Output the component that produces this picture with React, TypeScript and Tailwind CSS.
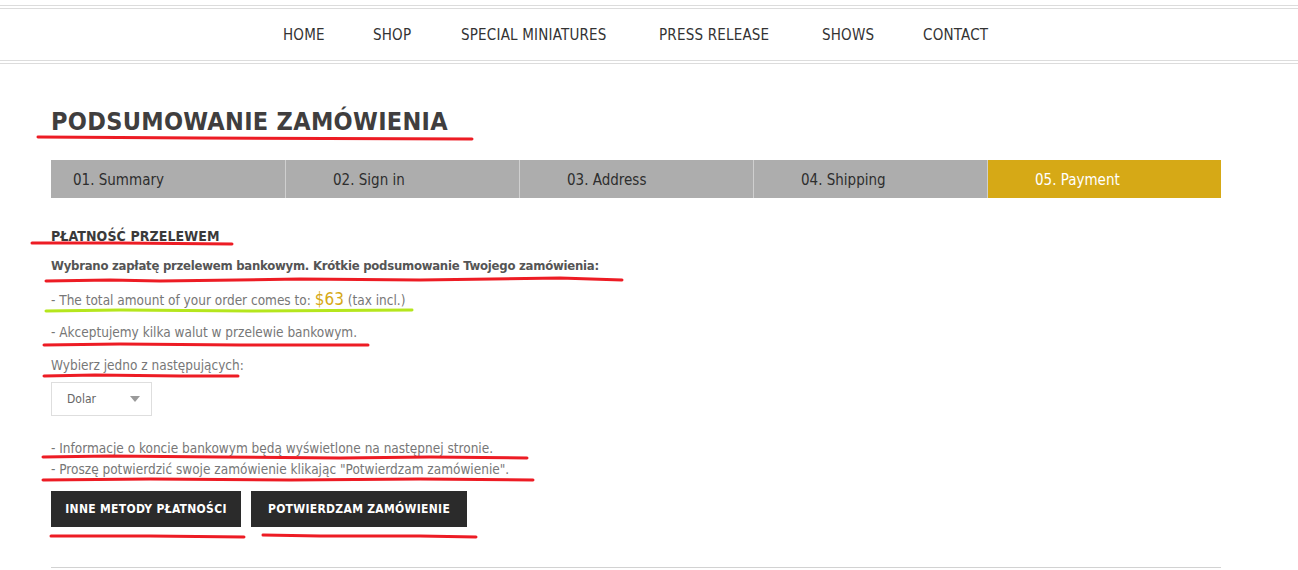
import React from "react";

const navItems: { label: string; w: string }[] = [
  { label: "HOME", w: "w-[90px]" },
  { label: "SHOP", w: "w-[88px]" },
  { label: "SPECIAL MINIATURES", w: "w-[198px]" },
  { label: "PRESS RELEASE", w: "w-[163px]" },
  { label: "SHOWS", w: "w-[101px]" },
  { label: "CONTACT", w: "w-[90px]" },
];

const steps = ["01. Summary", "02. Sign in", "03. Address", "04. Shipping", "05. Payment"];

function Annotations() {
  const red = "#ed1c24";
  const lines: { pts: string; c: string }[] = [
    { pts: "38,137 200,138 472,139", c: red },
    { pts: "32,243 120,243 232,244", c: red },
    { pts: "46,281 110,280 160,281 300,279 420,280 560,278 622,280", c: red },
    { pts: "46,311 120,310 250,311 412,310", c: "#b5e61d" },
    { pts: "44,345 120,344 240,345 368,345", c: red },
    { pts: "44,376 95,375 180,376 238,376", c: red },
    { pts: "43,457 110,456 220,457 340,458 430,457 527,458", c: red },
    { pts: "43,480 150,479 290,480 420,479 533,480", c: red },
    { pts: "51,536 150,536 244,537", c: red },
    { pts: "263,535 320,536 420,536 476,537", c: red },
  ];
  return (
    <svg
      className="pointer-events-none absolute left-0 top-0"
      width="1298"
      height="570"
      viewBox="0 0 1298 570"
    >
      {lines.map((l, i) => (
        <polyline
          key={i}
          points={l.pts}
          fill="none"
          stroke={l.c}
          strokeWidth={3}
          strokeLinecap="round"
          strokeLinejoin="round"
        />
      ))}
    </svg>
  );
}

export default function App() {
  return (
    <div className="relative w-[1298px] h-[570px] overflow-hidden bg-white font-['DejaVu_Sans_Condensed','DejaVu_Sans',sans-serif]">
      {/* Header */}
      <div className="pt-[5px]">
        <div className="h-px bg-[#dcdcdc]" />
        <div className="h-[2px]" />
        <div className="h-px bg-[#dcdcdc]" />
        <nav className="flex h-[51px] items-center pl-[283px] pt-[2px] text-[15px] text-[#333] tracking-[0.2px]">
          {navItems.map((n) => (
            <div key={n.label} className={`${n.w} shrink-0 whitespace-nowrap`}>
              {n.label}
            </div>
          ))}
        </nav>
        <div className="h-px bg-[#dcdcdc]" />
        <div className="h-[2px]" />
        <div className="h-px bg-[#dcdcdc]" />
      </div>

      {/* Content */}
      <div className="ml-[51px] w-[1170px]">
        <h1 className="mt-[43px] h-[30px] text-[25px] font-bold leading-[30px] tracking-[0.3px] text-[#403e3e] whitespace-nowrap">
          PODSUMOWANIE ZAMÓWIENIA
        </h1>

        <div className="mt-[23px] flex h-[38px]">
          {steps.map((s, i) => {
            const active = i === 4;
            return (
              <div
                key={s}
                className={`flex w-[234px] shrink-0 items-center pt-[2px] text-[15px] ${
                  i === 0 ? "pl-[22px]" : "pl-[47px] border-l border-[#cfcfcf]"
                } ${active ? "bg-[#d6a916] text-white" : "bg-[#adadad] text-[#2e2e2e]"}`}
              >
                {s}
              </div>
            );
          })}
        </div>

        <h3 className="mt-[29px] h-[18px] text-[14px] font-bold leading-[18px] tracking-[0.1px] text-[#3a3a3a]">
          PŁATNOŚĆ PRZELEWEM
        </h3>

        <p className="mt-[11px] h-[20px] text-[13px] font-bold leading-[20px] tracking-[-0.25px] text-[#555] whitespace-nowrap">
          Wybrano zapłatę przelewem bankowym. Krótkie podsumowanie Twojego zamówienia:
        </p>

        <p className="mt-[13px] h-[20px] text-[13.5px] leading-[20px] text-[#777] whitespace-nowrap">
          - The total amount of your order comes to:{" "}
          <span className="text-[17px] text-[#d6a916]">$63</span> (tax incl.)
        </p>

        <p className="mt-[13px] h-[20px] text-[13.5px] leading-[20px] text-[#777] whitespace-nowrap">
          - Akceptujemy kilka walut w przelewie bankowym.
        </p>

        <p className="mt-[13px] h-[20px] text-[13.5px] leading-[20px] text-[#777] whitespace-nowrap">
          Wybierz jedno z następujących:
        </p>

        <div className="mt-[7px] flex h-[34px] w-[101px] items-center justify-between border border-[#dedede] pl-[15px] pr-[11px]">
          <span className="text-[12px] text-[#666]">Dolar</span>
          <svg width="10" height="6" viewBox="0 0 10 6">
            <polygon points="0,0 10,0 5,6" fill="#9a9a9a" />
          </svg>
        </div>

        <p className="mt-[22px] h-[21px] text-[13.5px] leading-[21px] text-[#777] whitespace-nowrap">
          - Informacje o koncie bankowym będą wyświetlone na następnej stronie.
        </p>
        <p className="h-[21px] text-[13.5px] leading-[21px] text-[#777] whitespace-nowrap">
          - Proszę potwierdzić swoje zamówienie klikając "Potwierdzam zamówienie".
        </p>

        <div className="mt-[11px] flex gap-[10px]">
          <button className="flex h-[36px] w-[190px] items-center justify-center bg-[#2b2b2b] text-[12px] font-bold tracking-[0.3px] text-white">
            INNE METODY PŁATNOŚCI
          </button>
          <button className="flex h-[36px] w-[216px] items-center justify-center bg-[#2b2b2b] text-[12px] font-bold tracking-[0.3px] text-white">
            POTWIERDZAM ZAMÓWIENIE
          </button>
        </div>

        <div className="mt-[40px] h-px bg-[#d2d2d2]" />
      </div>

      <Annotations />
    </div>
  );
}
